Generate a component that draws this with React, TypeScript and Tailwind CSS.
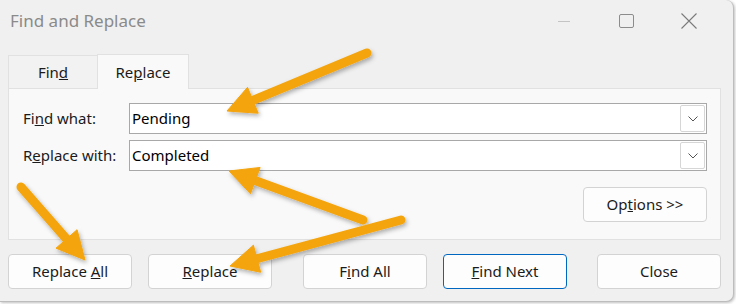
import React from 'react';

type Pt = [number, number];

// annotation arrows drawn over the dialog: tail -> tip
const arrows: { tail: Pt; tip: Pt }[] = [
  { tail: [367, 53], tip: [227, 111] },
  { tail: [363, 220], tip: [229, 171] },
  { tail: [401, 220], tip: [230, 266] },
  { tail: [21, 187], tip: [85, 260] },
];

const Arrow: React.FC<{ tail: Pt; tip: Pt }> = ({ tail, tip }) => {
  const dx = tip[0] - tail[0];
  const dy = tip[1] - tail[1];
  const len = Math.hypot(dx, dy);
  const ux = dx / len;
  const uy = dy / len;
  const headLen = 28;
  const half = 14;
  const bx = tip[0] - ux * headLen;
  const by = tip[1] - uy * headLen;
  const nx = -uy;
  const ny = ux;
  const pts = `${tip[0]},${tip[1]} ${bx + nx * half},${by + ny * half} ${bx - nx * half},${by - ny * half}`;
  return (
    <g>
      <line x1={tail[0]} y1={tail[1]} x2={bx + ux * 4} y2={by + uy * 4} stroke="#f4a40e" strokeWidth={9} strokeLinecap="round" />
      <polygon points={pts} fill="#f4a40e" stroke="#f4a40e" strokeWidth={1} strokeLinejoin="round" />
    </g>
  );
};

const Btn: React.FC<{ children: React.ReactNode; primary?: boolean; className?: string }> = ({ children, primary, className }) => (
  <div
    className={`h-[35px] w-[124px] flex items-center justify-center rounded-[4px] bg-[#fdfdfd] text-[15px] text-[#1b1b1b] ${
      primary ? 'border border-[#0067c0]' : 'border border-[#d3d3d3]'
    } ${className ?? ''}`}
  >
    <span>{children}</span>
  </div>
);

const Field: React.FC<{ label: React.ReactNode; value: string }> = ({ label, value }) => (
  <div className="flex items-center">
    <div className="w-[106px] text-[15px] text-[#1b1b1b]">{label}</div>
    <div className="h-[31px] w-[578px] flex items-center bg-white border border-[#a8a8a8] pl-[2px] pr-[1px]">
      <span className="flex-1 text-[15px] text-black">{value}</span>
      <div className="h-[27px] w-[25px] flex items-center justify-center border border-[#d6d6d6] rounded-[2px] bg-white">
        <svg width="10" height="6" viewBox="0 0 10 6">
          <path d="M0.5 0.5 L5 5 L9.5 0.5" fill="none" stroke="#555" strokeWidth="1" />
        </svg>
      </div>
    </div>
  </div>
);

export default function App() {
  return (
    <div
      className="relative w-[736px] h-[304px] overflow-hidden bg-white"
      style={{ fontFamily: '"Segoe UI", "Noto Sans", "Open Sans", sans-serif' }}
    >
      {/* dialog window */}
      <div className="w-[734px] h-[302px] bg-[#f0f0f0] border-r border-b border-[#bdbdbd] rounded-tr-[8px] rounded-br-[8px] shadow-[1px_1px_3px_rgba(0,0,0,0.25)] flex flex-col">
        {/* title bar */}
        <div className="h-[42px] flex items-center pl-[10px]">
          <span className="text-[17px] text-[#8a8a8a]">Find and Replace</span>
          <div className="ml-auto flex items-center h-full">
            <div className="w-[62px] flex justify-center">
              <div className="w-[12px] h-px bg-[#c4c4c4]" />
            </div>
            <div className="w-[62px] flex justify-center">
              <div className="w-[15px] h-[14px] border border-[#8c8c8c] rounded-[2px]" />
            </div>
            <div className="w-[64px] flex justify-center mr-[12px]">
              <svg width="16" height="16" viewBox="0 0 16 16">
                <path d="M0.5 0.5 L15.5 15.5 M15.5 0.5 L0.5 15.5" stroke="#7a7a7a" strokeWidth="1.1" />
              </svg>
            </div>
          </div>
        </div>

        {/* tabs */}
        <div className="flex pl-[8px] mt-[12px] h-[34px]">
          <div className="w-[89px] flex items-center justify-center border-t border-l border-[#e1e1e1] bg-[#f2f2f2] text-[15px] text-[#1b1b1b] mt-px">
            <span>Fin<u>d</u></span>
          </div>
          <div className="w-[92px] flex items-center justify-center border-t border-x border-[#e1e1e1] bg-[#f9f9f9] text-[15px] text-[#1b1b1b] relative z-10 h-[35px]">
            <span>Re<u>p</u>lace</span>
          </div>
        </div>

        {/* tab panel */}
        <div className="ml-[8px] mr-[12px] h-[152px] bg-[#f9f9f9] border border-[#e1e1e1] flex flex-col pl-[14px] pr-[13px] pt-[14px]">
          <div className="flex flex-col gap-[6px]">
            <Field label={<>Fi<u>n</u>d what:</>} value="Pending" />
            <Field label={<>R<u>e</u>place with:</>} value="Completed" />
          </div>
          <div className="flex justify-end mt-[16px]">
            <Btn className="w-[122px]">
              Op<u>t</u>ions &gt;&gt;
            </Btn>
          </div>
        </div>

        {/* bottom buttons */}
        <div className="flex pl-[8px] mt-[14px]">
          <Btn>
            Replace <u>A</u>ll
          </Btn>
          <Btn className="ml-[16px] w-[123px]">
            <u>R</u>eplace
          </Btn>
          <Btn className="ml-[31px] w-[123px]">
            F<u>i</u>nd All
          </Btn>
          <Btn primary className="ml-[16px]">
            <u>F</u>ind Next
          </Btn>
          <Btn className="ml-[30px] w-[123px]">Close</Btn>
        </div>
      </div>

      {/* annotation overlay */}
      <svg className="absolute inset-0 pointer-events-none" width="736" height="304" viewBox="0 0 736 304">
        <defs>
          <filter id="sh" x="-20%" y="-20%" width="140%" height="140%">
            <feDropShadow dx="1.5" dy="2.5" stdDeviation="2" floodColor="#000" floodOpacity="0.3" />
          </filter>
        </defs>
        <g filter="url(#sh)">
          {arrows.map((a, i) => (
            <Arrow key={i} tail={a.tail} tip={a.tip} />
          ))}
        </g>
      </svg>
    </div>
  );
}
